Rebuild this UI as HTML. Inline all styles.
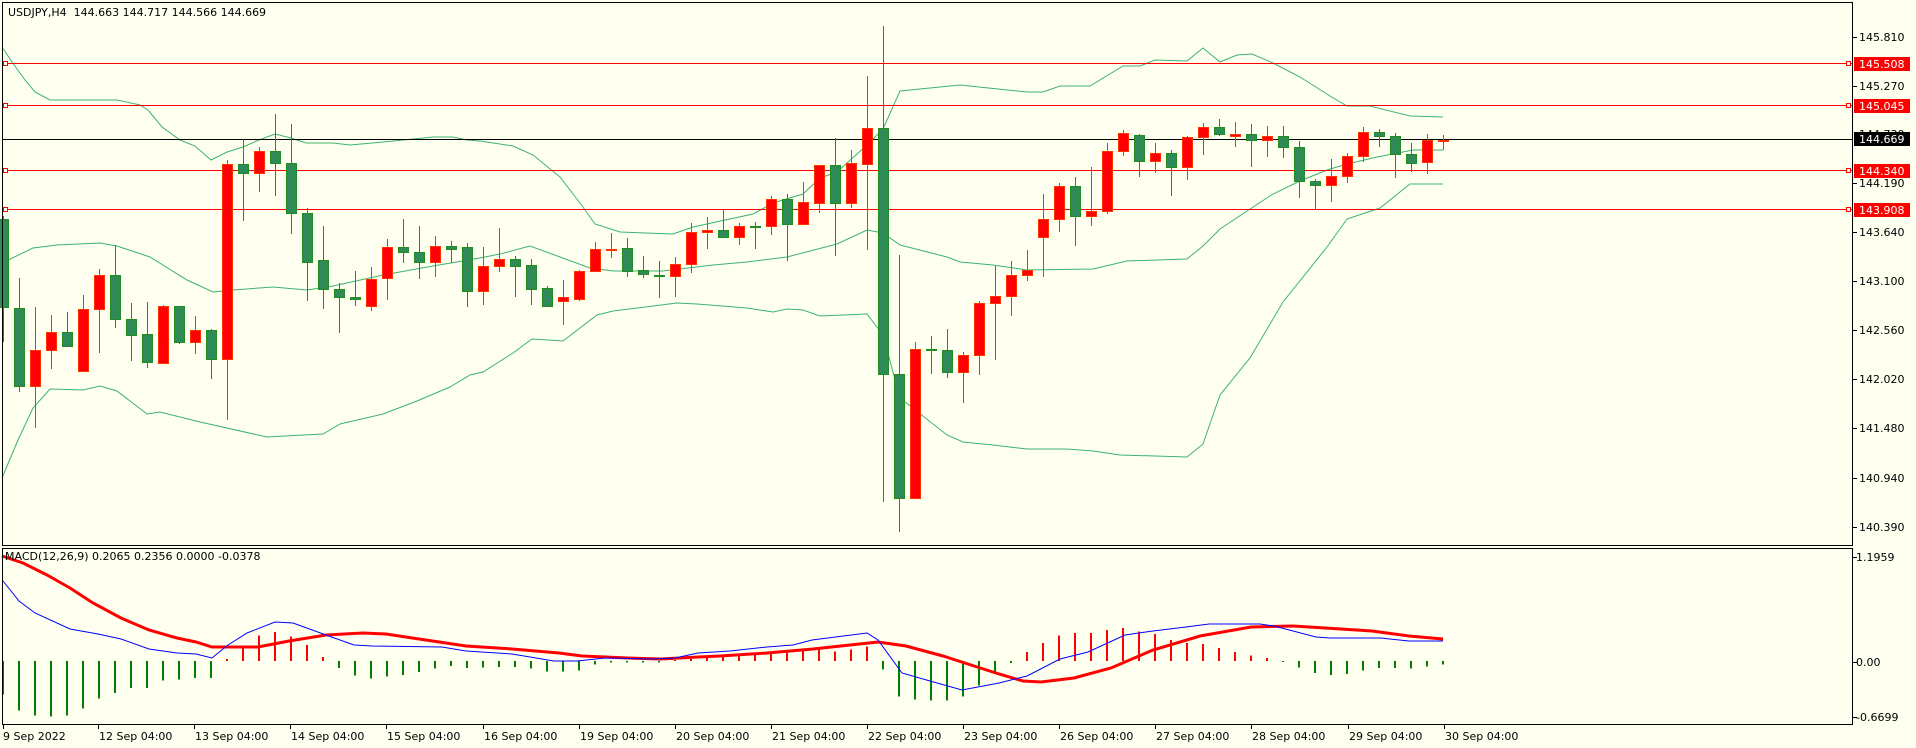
<!DOCTYPE html>
<html><head><meta charset="utf-8"><style>
html,body{margin:0;padding:0;background:#fffff0;}
body{width:1916px;height:748px;overflow:hidden;position:relative;font-family:"DejaVu Sans","Liberation Sans",sans-serif;}
svg{position:absolute;left:0;top:0;}
text{font-family:"DejaVu Sans","Liberation Sans",sans-serif;font-size:11px;fill:#000;}
</style></head><body>
<svg id="s" width="1916" height="748" viewBox="0 0 1916 748" xmlns="http://www.w3.org/2000/svg" shape-rendering="crispEdges">
<rect x="0" y="0" width="1916" height="748" fill="#fffff0"/>
<g id="bands" fill="none" stroke="#3cb371" stroke-width="1" shape-rendering="auto">
<polyline points="2,47 12,62 25,80 35,92 50,100 90,100 117,100 140,105 148,110 162,127 180,140 195,146 211,160 227,152 243,147 259,140 275,134 291,138 306,143 333,143 350,145 383,142 433,137 453,137 467,140 480,141 513,146 533,155 560,177 580,203 595,224 620,232 673,234 693,227 753,214 773,203 803,194 820,178 837,172 867,145 883,129 900,91 960,85 1027,92 1043,92 1060,86 1090,86 1123,66 1140,66 1155,60 1187,61 1203,48 1220,62 1237,55 1252,54 1273,63 1300,77 1330,96 1347,106 1370,106 1410,116 1443,117"/>
<polyline points="2,263 33,248 57,245 100,243 117,246 150,257 187,280 213,292 233,290 273,287 307,290 333,286 383,275 433,266 480,258 500,254 530,246 590,268 613,271 663,271 713,265 747,262 787,257 837,244 867,230 883,233 900,245 947,257 960,262 993,265 1027,270 1093,269 1127,261 1187,259 1203,246 1220,229 1247,211 1273,194 1300,181 1327,170 1347,164 1377,157 1413,150 1443,150"/>
<polyline points="2,478 18,440 33,408 50,389 83,390 100,386 117,391 147,414 160,412 200,422 267,437 323,434 340,424 383,414 417,401 450,387 470,375 483,372 513,353 532,339 563,341 597,315 613,311 677,303 697,304 747,308 773,312 787,309 803,310 820,316 867,314 883,335 900,398 947,435 963,442 993,445 1027,449 1067,449 1093,451 1120,455 1187,457 1203,444 1220,395 1250,358 1283,302 1327,247 1347,219 1380,208 1410,184 1443,184"/>
</g>
<g id="hl">
<rect x="2" y="63" width="1850" height="1" fill="#ff0000"/>
<rect x="2" y="105" width="1850" height="1" fill="#ff0000"/>
<rect x="2" y="139" width="1850" height="1" fill="#000"/>
<rect x="2" y="170" width="1850" height="1" fill="#ff0000"/>
<rect x="2" y="209" width="1850" height="1" fill="#ff0000"/>
</g>
<g id="candles"></g>
<g id="hist"></g>
<g fill="none" shape-rendering="auto">
<polyline stroke="#ff0000" stroke-width="3" points="2,556 23,563 47,575 70,588 93,603 121,618 149,630 177,638 196,642 212,647 258,647 289,641 326,635 363,633 386,634 419,639 466,646 512,649 559,653 582,656 628,658 661,659 698,657 720,656 767,653 813,649 850,645 878,642 906,646 943,656 971,665 999,674 1023,681 1041,682 1074,678 1111,668 1153,650 1200,636 1251,627 1293,626 1325,628 1372,631 1409,636 1443,639"/>
<polyline stroke="#0000ff" stroke-width="1" points="3,581 19,601 35,613 70,629 98,634 121,639 149,649 177,653 196,654 212,658 228,645 247,633 275,622 293,623 326,635 354,645 372,646 442,647 466,651 512,654 554,661 577,661 605,658 652,659 675,658 698,653 730,651 767,647 793,645 812,640 867,633 878,640 902,673 930,681 962,690 999,683 1027,676 1060,659 1088,652 1125,635 1153,631 1186,627 1209,624 1260,624 1274,626 1316,637 1330,638 1381,638 1409,641 1443,641"/>
</g>
<rect x="2.5" y="2.5" width="1850" height="543" fill="none" stroke="#000"/>
<rect x="2.5" y="548.5" width="1850" height="176" fill="none" stroke="#000"/>
<g fill="#fffff0" stroke="#ff0000">
<rect x="3.5" y="61.5" width="4" height="4"/><rect x="1846.5" y="61.5" width="4" height="4"/>
<rect x="3.5" y="103.5" width="4" height="4"/><rect x="1846.5" y="103.5" width="4" height="4"/>
<rect x="3.5" y="168.5" width="4" height="4"/><rect x="1846.5" y="168.5" width="4" height="4"/>
<rect x="3.5" y="207.5" width="4" height="4"/><rect x="1846.5" y="207.5" width="4" height="4"/>
</g>
<g fill="#000">
<rect x="1853" y="37" width="4" height="1"/><rect x="1853" y="86" width="4" height="1"/>
<rect x="1853" y="183" width="4" height="1"/><rect x="1853" y="232" width="4" height="1"/>
<rect x="1853" y="281" width="4" height="1"/><rect x="1853" y="330" width="4" height="1"/>
<rect x="1853" y="379" width="4" height="1"/><rect x="1853" y="428" width="4" height="1"/>
<rect x="1853" y="478" width="4" height="1"/><rect x="1853" y="527" width="4" height="1"/>
<rect x="1853" y="557" width="4" height="1"/><rect x="1853" y="662" width="4" height="1"/><rect x="1853" y="717" width="4" height="1"/>
</g>
<g>
<text x="1859" y="41">145.810</text>
<text x="1859" y="90">145.270</text>
<text x="1859" y="138">144.730</text>
<text x="1859" y="187">144.190</text>
<text x="1859" y="236">143.640</text>
<text x="1859" y="285">143.100</text>
<text x="1859" y="334">142.560</text>
<text x="1859" y="383">142.020</text>
<text x="1859" y="432">141.480</text>
<text x="1859" y="482">140.940</text>
<text x="1859" y="531">140.390</text>
<text x="1856" y="561">1.1959</text>
<text x="1856" y="666">0.00</text>
<text x="1856" y="721">-0.6699</text>
</g>
<g>
<rect x="1854" y="57" width="56" height="14" fill="#ff0000"/><text x="1859" y="68" style="fill:#fff">145.508</text>
<rect x="1854" y="99" width="56" height="14" fill="#ff0000"/><text x="1859" y="110" style="fill:#fff">145.045</text>
<rect x="1854" y="132" width="56" height="14" fill="#000"/><text x="1859" y="143" style="fill:#fff">144.669</text>
<rect x="1854" y="164" width="56" height="14" fill="#ff0000"/><text x="1859" y="175" style="fill:#fff">144.340</text>
<rect x="1854" y="203" width="56" height="14" fill="#ff0000"/><text x="1859" y="214" style="fill:#fff">143.908</text>
</g>
<text x="8" y="16" xml:space="preserve">USDJPY,H4  144.663 144.717 144.566 144.669</text>
<text x="5" y="560">MACD(12,26,9) 0.2065 0.2356 0.0000 -0.0378</text>
<g id="dt"></g>
<g>
<text x="3" y="740">9 Sep 2022</text>
<text x="99" y="740">12 Sep 04:00</text>
<text x="195" y="740">13 Sep 04:00</text>
<text x="291" y="740">14 Sep 04:00</text>
<text x="387" y="740">15 Sep 04:00</text>
<text x="484" y="740">16 Sep 04:00</text>
<text x="580" y="740">19 Sep 04:00</text>
<text x="676" y="740">20 Sep 04:00</text>
<text x="772" y="740">21 Sep 04:00</text>
<text x="868" y="740">22 Sep 04:00</text>
<text x="964" y="740">23 Sep 04:00</text>
<text x="1060" y="740">26 Sep 04:00</text>
<text x="1156" y="740">27 Sep 04:00</text>
<text x="1252" y="740">28 Sep 04:00</text>
<text x="1349" y="740">29 Sep 04:00</text>
<text x="1445" y="740">30 Sep 04:00</text>
</g>
</svg>
<script>
var C=[["g",219,307,216,342],["g",308,386,278,392],["r",350,386,307,428],["r",332,350,315,369],["g",332,346,312,347],["r",309,371,295,371],["r",275,309,269,353],["g",275,319,245,328],["g",319,335,303,361],["g",334,362,302,368],["r",306,363,305,363],["g",306,342,306,344],["r",330,342,316,354],["g",330,359,329,379],["r",164,359,160,420],["g",164,173,139,221],["r",151,173,147,192],["g",151,163,114,196],["g",163,213,124,234],["g",213,262,208,301],["g",260,289,226,309],["g",289,297,283,333],["g",297,299,271,306],["r",279,306,267,311],["r",247,278,239,300],["g",247,252,219,263],["g",252,262,226,279],["r",246,262,236,277],["g",246,249,241,263],["g",247,291,243,307],["r",266,291,247,305],["r",259,266,228,272],["g",259,266,256,297],["g",265,289,259,305],["g",288,306,286,306],["r",297,301,280,325],["r",271,299,270,301],["r",249,271,242,271],["r",249,250,233,258],["g",248,271,238,277],["g",270,274,256,278],["g",275,276,261,298],["r",264,276,257,297],["r",232,264,223,273],["r",230,232,217,249],["g",230,237,209,237],["r",226,237,223,245],["g",226,226,222,249],["r",199,226,196,235],["g",199,224,194,261],["r",202,224,182,224],["r",165,203,165,213],["g",165,203,138,256],["r",163,203,150,208],["r",128,164,76,250],["g",128,374,26,502],["g",374,498,255,532],["r",349,498,342,498],["g",349,350,336,374],["g",350,372,329,378],["r",355,372,352,403],["r",303,355,301,375],["r",296,303,266,360],["r",275,296,261,316],["r",270,275,250,281],["r",219,237,194,277],["r",186,219,183,232],["g",186,216,177,246],["r",211,216,167,226],["r",151,211,143,214],["r",133,151,130,156],["g",135,161,134,177],["r",153,161,143,173],["g",153,167,150,196],["r",137,167,136,180],["r",127,137,123,155],["g",127,134,119,136],["r",134,136,122,147],["g",134,140,124,167],["r",136,140,126,157],["g",136,147,126,158],["g",147,181,141,198],["g",181,185,179,210],["r",176,185,159,202],["r",156,176,153,183],["r",132,156,127,162],["g",132,136,129,147],["g",136,154,133,178],["g",154,163,143,172],["r",140,162,134,174],["r",140,140,135,150]];
var H=[440,488,503,506,503,482,452,435,420,420,398,395,390,390,333,298,263,252,265,291,327,360,383,392,386,381,372,362,354,360,358,357,357,362,371,371,367,350,343,343,343,343,336,333,322,322,318,315,310,312,307,302,310,305,296,365,446,455,458,458,446,412,378,345,312,285,262,255,255,246,240,250,258,276,285,288,300,312,322,330,342,359,375,381,378,368,360,360,362,356,350];
var ns="http://www.w3.org/2000/svg",g=document.getElementById("candles"),h=document.getElementById("hist"),d=document.getElementById("dt");
function el(p,t,a){var e=document.createElementNS(ns,t);for(var k in a)e.setAttribute(k,a[k]);p.appendChild(e);return e;}
C.forEach(function(c,i){var x=3+16*i,red=c[0]=="r",st=red?"#ff3300":"#228b22",fl=red?"#ff0000":"#2e8b57";
el(g,"rect",{x:x,y:c[3],width:1,height:Math.max(1,c[4]-c[3]),fill:st});
if(c[2]-c[1]<2){el(g,"rect",{x:x-5,y:c[1],width:11,height:2,fill:st});}
else el(g,"rect",{x:x-4.5,y:c[1]+0.5,width:10,height:c[2]-c[1],fill:fl,stroke:st});});
H.forEach(function(v,i){var x=3+16*i,y=548+v/3,b=661;var red=y<b;
el(h,"rect",{x:x-1,y:red?y:b,width:2,height:Math.max(1,Math.abs(y-b)),fill:red?"#ff0000":"#008000"});});
var tx=[98,194,290,386,483,579,675,771,867,963,1059,1155,1251,1348,1444];
el(d,"rect",{x:3,y:725,width:1,height:4,fill:"#000"});
tx.forEach(function(x){el(d,"rect",{x:x,y:725,width:1,height:4,fill:"#000"});});
</script>
</body></html>
